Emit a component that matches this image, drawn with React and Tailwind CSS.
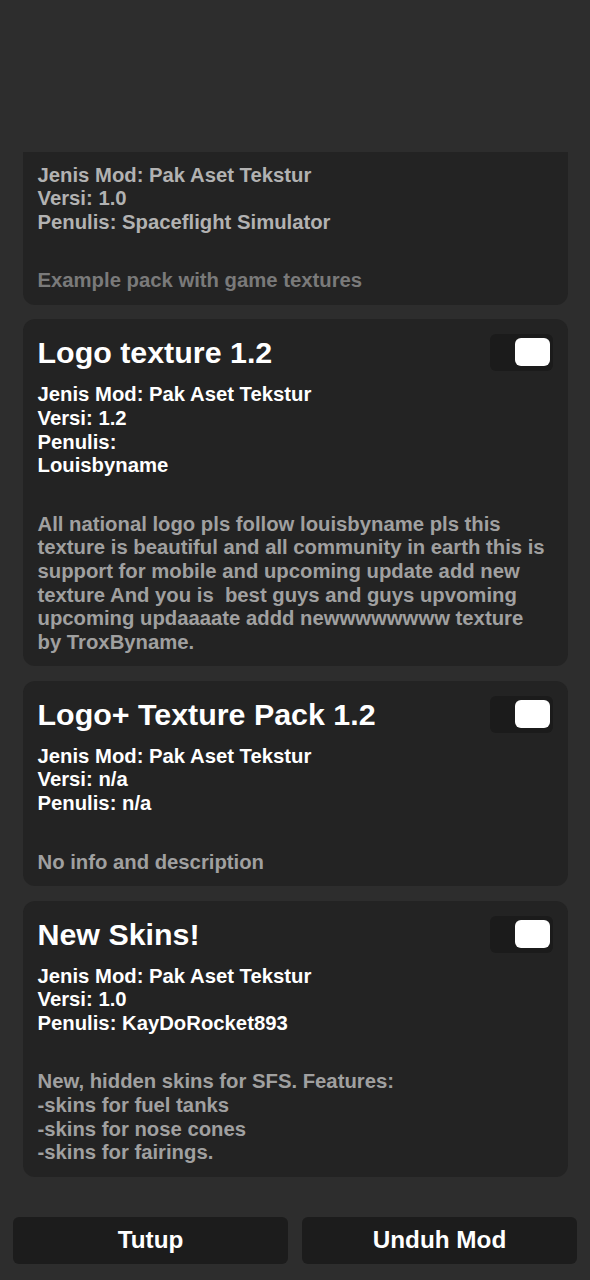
import React from "react";

const mods = [
  {
    title: "",
    info: ["Jenis Mod: Pak Aset Tekstur", "Versi: 1.0", "Penulis: Spaceflight Simulator"],
    desc: "Example pack with game textures",
    dim: true,
  },
  {
    title: "Logo texture 1.2",
    info: ["Jenis Mod: Pak Aset Tekstur", "Versi: 1.2", "Penulis:", "Louisbyname"],
    desc:
      "All national logo pls follow louisbyname pls this texture is beautiful and all community in earth this is support for mobile and upcoming update add new texture And you is  best guys and guys upvoming upcoming updaaaate addd newwwwwwww texture by TroxByname.",
  },
  {
    title: "Logo+ Texture Pack 1.2",
    info: ["Jenis Mod: Pak Aset Tekstur", "Versi: n/a", "Penulis: n/a"],
    desc: "No info and description",
  },
  {
    title: "New Skins!",
    info: ["Jenis Mod: Pak Aset Tekstur", "Versi: 1.0", "Penulis: KayDoRocket893"],
    desc: "New, hidden skins for SFS. Features:\n-skins for fuel tanks\n-skins for nose cones\n-skins for fairings.",
  },
];

function Toggle() {
  return (
    <div className="w-[63px] h-[37px] rounded-[6px] bg-[#1b1b1b] flex items-center justify-end pr-[3px] pb-[1px] shrink-0">
      <div className="w-[35px] h-[28px] rounded-[6px] bg-white" />
    </div>
  );
}

function ModCard({ mod }) {
  return (
    <div className="rounded-[12px] bg-[#232323] px-[15px] pt-[15px] pb-[12px]">
      <div className="flex items-center justify-between h-[37px]">
        <div className={`text-[30.4px] font-bold leading-[37px] ${mod.dim ? "text-[#b4b4b4]" : "text-white"}`}>
          {mod.title}
        </div>
        <Toggle />
      </div>
      <div className={`mt-[12px] text-[20.3px] font-bold leading-[23.6px] ${mod.dim ? "text-[#b2b2b2]" : "text-white"}`}>
        {mod.info.map((l, i) => (
          <div key={i}>{l}</div>
        ))}
      </div>
      <div
        className={`mt-[35px] pr-[4px] text-[20.3px] font-bold leading-[23.6px] whitespace-pre-wrap ${
          mod.dim ? "text-[#7a7a7a]" : "text-[#a0a0a0]"
        }`}
      >
        {mod.desc}
      </div>
    </div>
  );
}

export default function App() {
  return (
    <div className="w-[590px] h-[1280px] bg-[#2d2d2d] flex flex-col overflow-hidden font-['Liberation_Sans',Arial,sans-serif]">
      <div className="h-[152px] shrink-0" />
      <div className="flex-1 min-h-0 overflow-hidden px-[22.5px]">
        <div className="mt-[-52.5px] flex flex-col gap-[14.5px]">
          {mods.map((m, i) => (
            <ModCard key={i} mod={m} />
          ))}
        </div>
      </div>
      <div className="shrink-0 px-[13px] pb-[16px] pt-[14px] flex gap-[14px]">
        <button className="flex-1 h-[47px] rounded-[6px] bg-[#1c1c1c] text-white text-[24.3px] font-bold">
          Tutup
        </button>
        <button className="flex-1 h-[47px] rounded-[6px] bg-[#1c1c1c] text-white text-[24.3px] font-bold">
          Unduh Mod
        </button>
      </div>
    </div>
  );
}
